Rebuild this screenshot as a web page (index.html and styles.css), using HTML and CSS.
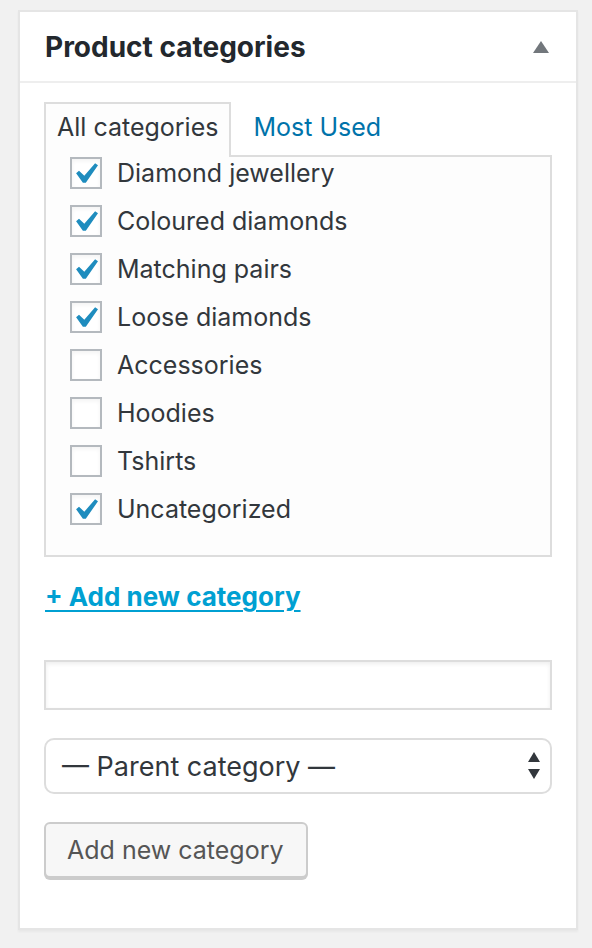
FILE: index.html
```html
<!DOCTYPE html>
<html>
<head>
<meta charset="utf-8">
<link rel="stylesheet" href="styles.css">
</head>
<body>
<div class="card">
  <div class="card-header">
    <h2 class="card-title">Product categories</h2>
    <svg class="toggle" width="16" height="12" viewBox="0 0 16 12"><polygon points="8,0 16,12 0,12" fill="#72777c"/></svg>
  </div>
  <div class="inside">
    <div class="tabs">
      <span class="tab tab-active">All categories</span>
      <a class="tab tab-link">Most Used</a>
    </div>
    <div class="panel">
      <ul class="cat-list">
        <li class="cat"><span class="box"><svg viewBox="2 2 28 28" width="28" height="28"><polygon points="25.1,6.3 28,8.2 15.8,25.8 12.9,25.8 6.1,16.3 9,13.7 14.3,18.7" fill="#1e8cbe"/></svg></span><span class="cat-name">Diamond jewellery</span></li>
        <li class="cat"><span class="box"><svg viewBox="2 2 28 28" width="28" height="28"><polygon points="25.1,6.3 28,8.2 15.8,25.8 12.9,25.8 6.1,16.3 9,13.7 14.3,18.7" fill="#1e8cbe"/></svg></span><span class="cat-name">Coloured diamonds</span></li>
        <li class="cat"><span class="box"><svg viewBox="2 2 28 28" width="28" height="28"><polygon points="25.1,6.3 28,8.2 15.8,25.8 12.9,25.8 6.1,16.3 9,13.7 14.3,18.7" fill="#1e8cbe"/></svg></span><span class="cat-name">Matching pairs</span></li>
        <li class="cat"><span class="box"><svg viewBox="2 2 28 28" width="28" height="28"><polygon points="25.1,6.3 28,8.2 15.8,25.8 12.9,25.8 6.1,16.3 9,13.7 14.3,18.7" fill="#1e8cbe"/></svg></span><span class="cat-name">Loose diamonds</span></li>
        <li class="cat"><span class="box"></span><span class="cat-name">Accessories</span></li>
        <li class="cat"><span class="box"></span><span class="cat-name">Hoodies</span></li>
        <li class="cat"><span class="box"></span><span class="cat-name">Tshirts</span></li>
        <li class="cat"><span class="box"><svg viewBox="2 2 28 28" width="28" height="28"><polygon points="25.1,6.3 28,8.2 15.8,25.8 12.9,25.8 6.1,16.3 9,13.7 14.3,18.7" fill="#1e8cbe"/></svg></span><span class="cat-name">Uncategorized</span></li>
      </ul>
    </div>
    <a class="add-link">+ Add new category</a>
    <div class="text-input"></div>
    <div class="select">
      <span class="select-text">— Parent category —</span>
      <svg class="select-arrows" width="12" height="28" viewBox="0 0 12 28"><polygon points="6,0 12,10 0,10" fill="#32373c"/><polygon points="0,17 12,17 6,27" fill="#32373c"/></svg>
    </div>
    <div class="button">Add new category</div>
  </div>
</div>
</body>
</html>
```
FILE: styles.css
```css
html, body {
  margin: 0;
  padding: 0;
}
body {
  background: #f1f1f1;
  font-family: Inter, "Liberation Sans", sans-serif;
  color: #32373c;
  padding-top: 10px;
  height: 948px;
  box-sizing: border-box;
  overflow: hidden;
}
.card {
  margin-left: 18px;
  width: 560px;
  box-sizing: border-box;
  background: #fff;
  border: 2px solid #e5e5e5;
  box-shadow: 0 2px 2px rgba(0,0,0,0.04);
  padding-bottom: 50px;
}
.card-header {
  height: 69px;
  border-bottom: 2px solid #eee;
  display: flex;
  align-items: center;
  justify-content: space-between;
  padding: 0 27px 0 25px;
}
.card-title {
  margin: 0;
  font-size: 28px;
  font-weight: 700;
  color: #23282d;
}
.toggle {
  display: block;
}
.inside {
  padding: 19px 24px 0 24px;
}
.tabs {
  display: flex;
  align-items: flex-end;
}
.tab {
  font-size: 25px;
  line-height: 36px;
  padding: 5px 11px 12px 11px;
  border: 2px solid transparent;
  border-bottom: none;
  margin-bottom: -2px;
}
.tab-active {
  background: #fdfdfd;
  border-color: #ddd;
  color: #32373c;
  position: relative;
  z-index: 1;
}
.tab-link {
  color: #0073aa;
  margin-left: 9px;
}
.panel {
  border: 2px solid #ddd;
  background: #fdfdfd;
  padding: 0 24px 30px 24px;
}
.cat-list {
  list-style: none;
  margin: 0;
  padding: 0;
  display: flex;
  flex-direction: column;
  gap: 16px;
}
.cat {
  display: flex;
  align-items: center;
  gap: 15px;
  height: 32px;
  font-size: 25px;
  color: #32373c;
}
.box {
  width: 32px;
  height: 32px;
  box-sizing: border-box;
  border: 2px solid #b4b9be;
  background: #fff;
  flex: none;
  box-shadow: inset 0 2px 4px rgba(0,0,0,0.05);
}
.box svg {
  display: block;
}
.add-link {
  display: block;
  margin-top: 20px;
  margin-left: 1px;
  font-size: 26px;
  line-height: 40px;
  font-weight: 700;
  color: #00a0d2;
  text-decoration: underline;
  text-decoration-thickness: 2px;
  text-underline-offset: 4px;
}
.text-input {
  margin-top: 43px;
  height: 50px;
  box-sizing: border-box;
  border: 2px solid #ddd;
  background: #fff;
  box-shadow: inset 0 2px 4px rgba(0,0,0,0.07);
}
.select {
  margin-top: 28px;
  height: 56px;
  box-sizing: border-box;
  border: 2px solid #ddd;
  border-radius: 10px;
  background: #fff;
  display: flex;
  align-items: center;
  justify-content: space-between;
  padding: 0 10px 0 16px;
  font-size: 27px;
  color: #32373c;
}
.select-arrows {
  display: block;
}
.button {
  margin-top: 28px;
  width: 264px;
  height: 56px;
  box-sizing: border-box;
  border: 2px solid #ccc;
  border-radius: 6px;
  background: #f7f7f7;
  box-shadow: 0 2px 0 #ccc;
  display: flex;
  align-items: center;
  padding-left: 21px;
  font-size: 25px;
  color: #555;
}
```
